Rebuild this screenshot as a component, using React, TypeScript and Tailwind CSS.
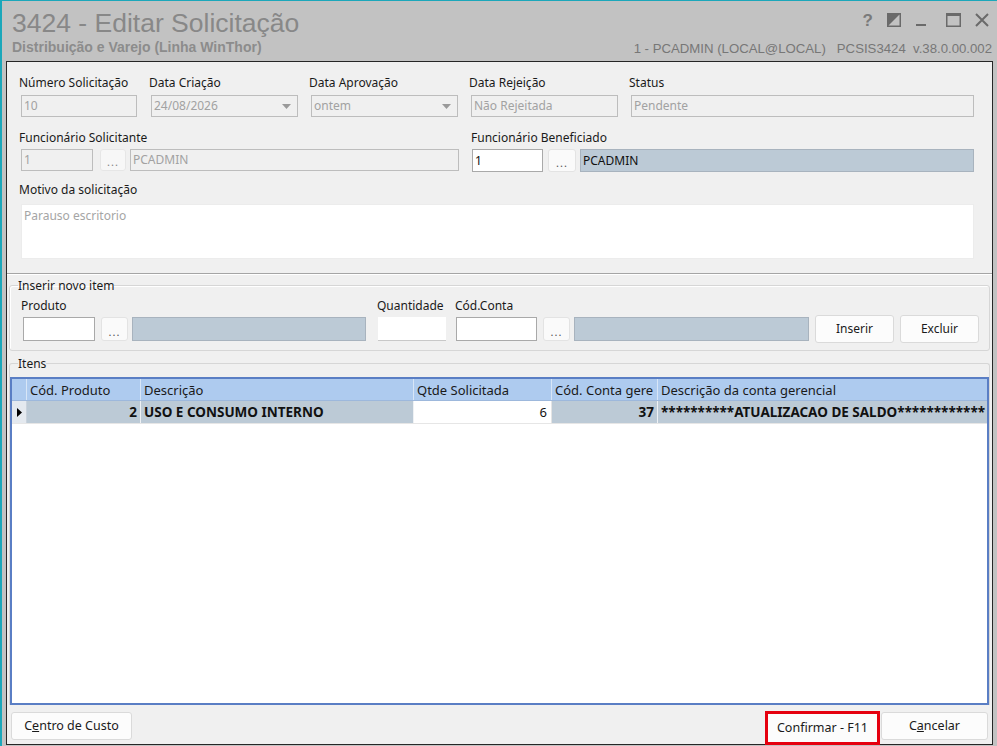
import React from "react";

const ui = { fontFamily: '"Noto Sans", "DejaVu Sans", sans-serif' };
const arial = { fontFamily: '"Liberation Sans", Arial, sans-serif' };

function Label({ children, className = "" }: { children: React.ReactNode; className?: string }) {
  return <div className={`text-[12px] leading-[15px] text-[#1a1a1a] whitespace-nowrap ${className}`}>{children}</div>;
}

function DisabledBox({ value, className = "", arrow = false }: { value: string; className?: string; arrow?: boolean }) {
  return (
    <div className={`h-[22px] border border-[#bdbdbd] bg-[#f0f0f0] flex items-center px-[2px] text-[12px] text-[#a2a2a2] ${className}`}>
      <span className="flex-1 truncate">{value}</span>
      {arrow && (
        <svg width="9" height="5" viewBox="0 0 9 5" className="mr-[4px]">
          <polygon points="0,0 9,0 4.5,5" fill="#9a9a9a" />
        </svg>
      )}
    </div>
  );
}

function Dots({ className = "" }: { className?: string }) {
  return (
    <div className={`rounded-[3px] border border-[#e3e3e3] bg-[#fafafa] flex items-end justify-center pb-[3px] text-[11px] leading-none text-[#555] tracking-[1px] ${className}`}>
      ...
    </div>
  );
}

function Btn({ children, className = "" }: { children: React.ReactNode; className?: string }) {
  return (
    <div className={`h-[28px] rounded-[3px] border border-[#dadada] bg-[#fcfcfc] flex items-center justify-center text-[#1a1a1a] whitespace-nowrap ${className}`}>
      {children}
    </div>
  );
}

export default function App() {
  return (
    <div className="w-[997px] h-[746px] bg-[#c2c2c2] border-l-2 border-t border-[#1ba7ba] flex flex-col overflow-hidden" style={ui}>
      {/* Title bar */}
      <div className="h-[60px] shrink-0 flex justify-between pl-[10px] pr-[5px]" style={arial}>
        <div className="flex flex-col">
          <div className="text-[26.5px] leading-[28px] mt-[8px] text-[#888888] whitespace-nowrap">3424 - Editar Solicitação</div>
          <div className="text-[14px] leading-[14px] mt-[3px] font-bold text-[#8c8c8c] whitespace-nowrap">Distribuição e Varejo (Linha WinThor)</div>
        </div>
        <div className="flex flex-col items-end">
          <div className="flex items-center gap-[14px] mt-[11px] h-[16px] mr-[3px]">
            <span className="text-[17px] font-bold text-[#7a7a7a] leading-none">?</span>
            <svg width="14" height="14" viewBox="0 0 14 14">
              <rect x="0.75" y="0.75" width="12.5" height="12.5" fill="none" stroke="#6a6a6a" strokeWidth="1.5" />
              <polygon points="0,0 14,0 0,14" fill="#6a6a6a" />
            </svg>
            <svg width="10" height="14" viewBox="0 0 10 14" className="ml-[1px]">
              <rect x="0" y="11" width="10" height="2" fill="#6a6a6a" />
            </svg>
            <svg width="15" height="14" viewBox="0 0 15 14" className="ml-[6px]">
              <rect x="0.75" y="0.75" width="13.5" height="12.5" fill="none" stroke="#6a6a6a" strokeWidth="1.5" />
              <rect x="0" y="0" width="15" height="3" fill="#6a6a6a" />
            </svg>
            <svg width="14" height="14" viewBox="0 0 14 14">
              <path d="M1 1 L13 13 M13 1 L1 13" stroke="#6a6a6a" strokeWidth="2" />
            </svg>
          </div>
          <div className="text-[13.2px] leading-[14px] mt-[14px] text-[#777] whitespace-nowrap">
            1 - PCADMIN (LOCAL@LOCAL)&nbsp;&nbsp;&nbsp;PCSIS3424&nbsp;&nbsp;v.38.0.00.002
          </div>
        </div>
      </div>

      {/* Main panel */}
      <div className="flex-1 min-h-0 ml-[4px] mr-[4px] mb-[1px] border border-[#262626] bg-[#f0f0f0] flex flex-col">
        {/* Header fields */}
        <div className="pl-[14px] pr-[18px] pt-[13px] shrink-0">
          <div className="flex">
            <div className="w-[116px] flex flex-col gap-[5px]">
              <Label className="-ml-[2px]">Número Solicitação</Label>
              <DisabledBox value="10" />
            </div>
            <div className="w-[147px] ml-[14px] flex flex-col gap-[5px]">
              <Label className="-ml-[2px]">Data Criação</Label>
              <DisabledBox value="24/08/2026" arrow />
            </div>
            <div className="w-[147px] ml-[13px] flex flex-col gap-[5px]">
              <Label className="-ml-[2px]">Data Aprovação</Label>
              <DisabledBox value="ontem" arrow />
            </div>
            <div className="w-[147px] ml-[13px] flex flex-col gap-[5px]">
              <Label className="-ml-[2px]">Data Rejeição</Label>
              <DisabledBox value="Não Rejeitada" />
            </div>
            <div className="flex-1 ml-[13px] flex flex-col gap-[5px]">
              <Label className="-ml-[2px]">Status</Label>
              <DisabledBox value="Pendente" />
            </div>
          </div>

          <div className="flex mt-[13px]">
            <div className="w-[438px] flex flex-col gap-[4px]">
              <Label className="-ml-[2px]">Funcionário Solicitante</Label>
              <div className="flex items-center">
                <DisabledBox value="1" className="w-[72px]" />
                <Dots className="w-[26px] h-[22px] ml-[7px] opacity-70" />
                <DisabledBox value="PCADMIN" className="flex-1 ml-[4px]" />
              </div>
            </div>
            <div className="flex-1 ml-[13px] flex flex-col gap-[4px]">
              <Label className="-ml-[1px]">Funcionário Beneficiado</Label>
              <div className="flex items-center">
                <div className="w-[71px] h-[23px] border border-[#a9a9a9] bg-white flex items-center px-[2px] text-[12px] text-[#111]">1</div>
                <Dots className="w-[28px] h-[23px] ml-[5px]" />
                <div className="flex-1 ml-[4px] h-[23px] border border-[#a8b3be] bg-[#bccad6] flex items-center px-[2px] text-[12px] text-[#111]">PCADMIN</div>
              </div>
            </div>
          </div>

          <Label className="mt-[10px] -ml-[2px]">Motivo da solicitação</Label>
          <div className="mt-[7px] h-[55px] bg-white border border-[#ececec] px-[2px] pt-[2px] text-[12px] text-[#a5a5a5]">Parauso escritorio</div>
        </div>

        {/* separator */}
        <div className="mt-[14px] shrink-0 border-t border-[#a5a5a5] border-b border-b-white" />

        {/* Inserir novo item */}
        <fieldset className="mx-[2px] mt-[3px] shrink-0 border border-[#d6d6d6] rounded-[3px] shadow-[inset_1px_1px_0_#ffffff]">
          <legend className="ml-[8px] text-[12px] leading-[15px] text-[#1a1a1a]">Inserir novo item</legend>
          <div className="flex items-end pl-[11px] pr-[8px] pb-[9px] pt-[5px]">
            <div className="flex flex-col">
              <Label className="mb-[4px]">Produto</Label>
              <div className="flex items-center ml-[2px]">
                <div className="w-[72px] h-[24px] border border-[#a9a9a9] bg-white" />
                <Dots className="w-[27px] h-[24px] ml-[6px]" />
                <div className="w-[234px] h-[24px] ml-[4px] border border-[#a8b3be] bg-[#bccad6]" />
              </div>
            </div>
            <div className="flex flex-col ml-[11px]">
              <Label className="mb-[4px]">Quantidade</Label>
              <div className="w-[68px] h-[24px] ml-[1px] bg-white border-b border-[#c8c8c8]" />
            </div>
            <div className="flex flex-col ml-[9px]">
              <Label className="mb-[4px]">Cód.Conta</Label>
              <div className="flex items-center ml-[1px]">
                <div className="w-[81px] h-[24px] border border-[#a9a9a9] bg-white" />
                <Dots className="w-[27px] h-[24px] ml-[6px]" />
                <div className="w-[235px] h-[24px] ml-[4px] border border-[#a8b3be] bg-[#bccad6]" />
              </div>
            </div>
            <Btn className="w-[79px] ml-[6px] mb-[-2px] text-[12px]">Inserir</Btn>
            <Btn className="w-[79px] ml-[6px] mb-[-2px] text-[12px]">Excluir</Btn>
          </div>
        </fieldset>

        {/* Itens */}
        <fieldset className="mx-[2px] mt-[5px] flex-1 border border-[#d6d6d6] border-b-0 rounded-t-[3px] min-h-0 flex flex-col">
          <legend className="ml-[8px] text-[12px] leading-[15px] text-[#1a1a1a]">Itens</legend>
          <div className="mt-[6px] flex-1 min-h-0 border-2 border-[#5a7ec4] bg-white flex flex-col text-[13px]">
            <div className="flex h-[22px] shrink-0 bg-[#aecbef] text-[#1a1a1a] leading-[22px] border-b border-[#9db8dc]">
              <div className="w-[15px] border-r border-[#d8e6f7]" />
              <div className="w-[114px] pl-[3px] border-r border-[#d8e6f7]">Cód. Produto</div>
              <div className="w-[273px] pl-[3px] border-r border-[#d8e6f7]">Descrição</div>
              <div className="w-[138px] pl-[3px] border-r border-[#d8e6f7]">Qtde Solicitada</div>
              <div className="w-[106px] pl-[3px] border-r border-[#d8e6f7] whitespace-nowrap overflow-hidden">Cód. Conta gere</div>
              <div className="flex-1 pl-[3px] whitespace-nowrap overflow-hidden">Descrição da conta gerencial</div>
            </div>
            <div className="flex h-[23px] shrink-0 leading-[22px] font-bold text-[13.5px] text-[#111] border-b border-[#e6e6e6]">
              <div className="w-[15px] bg-[#e4e9ef] border-r border-[#c9d2dc] flex items-center justify-center">
                <svg width="5" height="9" viewBox="0 0 5 9"><polygon points="0,0 5,4.5 0,9" fill="#000" /></svg>
              </div>
              <div className="w-[114px] bg-[#bccad6] text-right pr-[3px] border-r border-[#eef1f4]">2</div>
              <div className="w-[273px] bg-[#bccad6] pl-[3px] border-r border-[#eef1f4]">USO E CONSUMO INTERNO</div>
              <div className="w-[138px] bg-white text-right pr-[4px] font-normal text-[13px] border-r border-[#e4e4e4]">6</div>
              <div className="w-[106px] bg-[#bccad6] text-right pr-[3px] border-r border-[#eef1f4]">37</div>
              <div className="flex-1 min-w-0 bg-[#bccad6] pl-[3px] whitespace-nowrap overflow-hidden">**********ATUALIZACAO DE SALDO************</div>
            </div>
          </div>
        </fieldset>

        {/* Bottom buttons */}
        <div className="h-[39px] shrink-0 flex items-start pl-[4px] pr-[4px] pt-[7px]">
          <Btn className="w-[121px] text-[12.5px]">C<span className="underline">e</span>ntro de Custo</Btn>
          <div className="flex-1" />
          <div className="border-[3px] border-[#e5000f] flex -mt-[1px]">
            <Btn className="w-[109px] h-[24px] rounded-none border-0 text-[12.5px]">Confirmar - F11</Btn>
          </div>
          <Btn className="w-[107px] ml-[1px] text-[12.5px]">C<span className="underline">a</span>ncelar</Btn>
        </div>
      </div>
    </div>
  );
}
